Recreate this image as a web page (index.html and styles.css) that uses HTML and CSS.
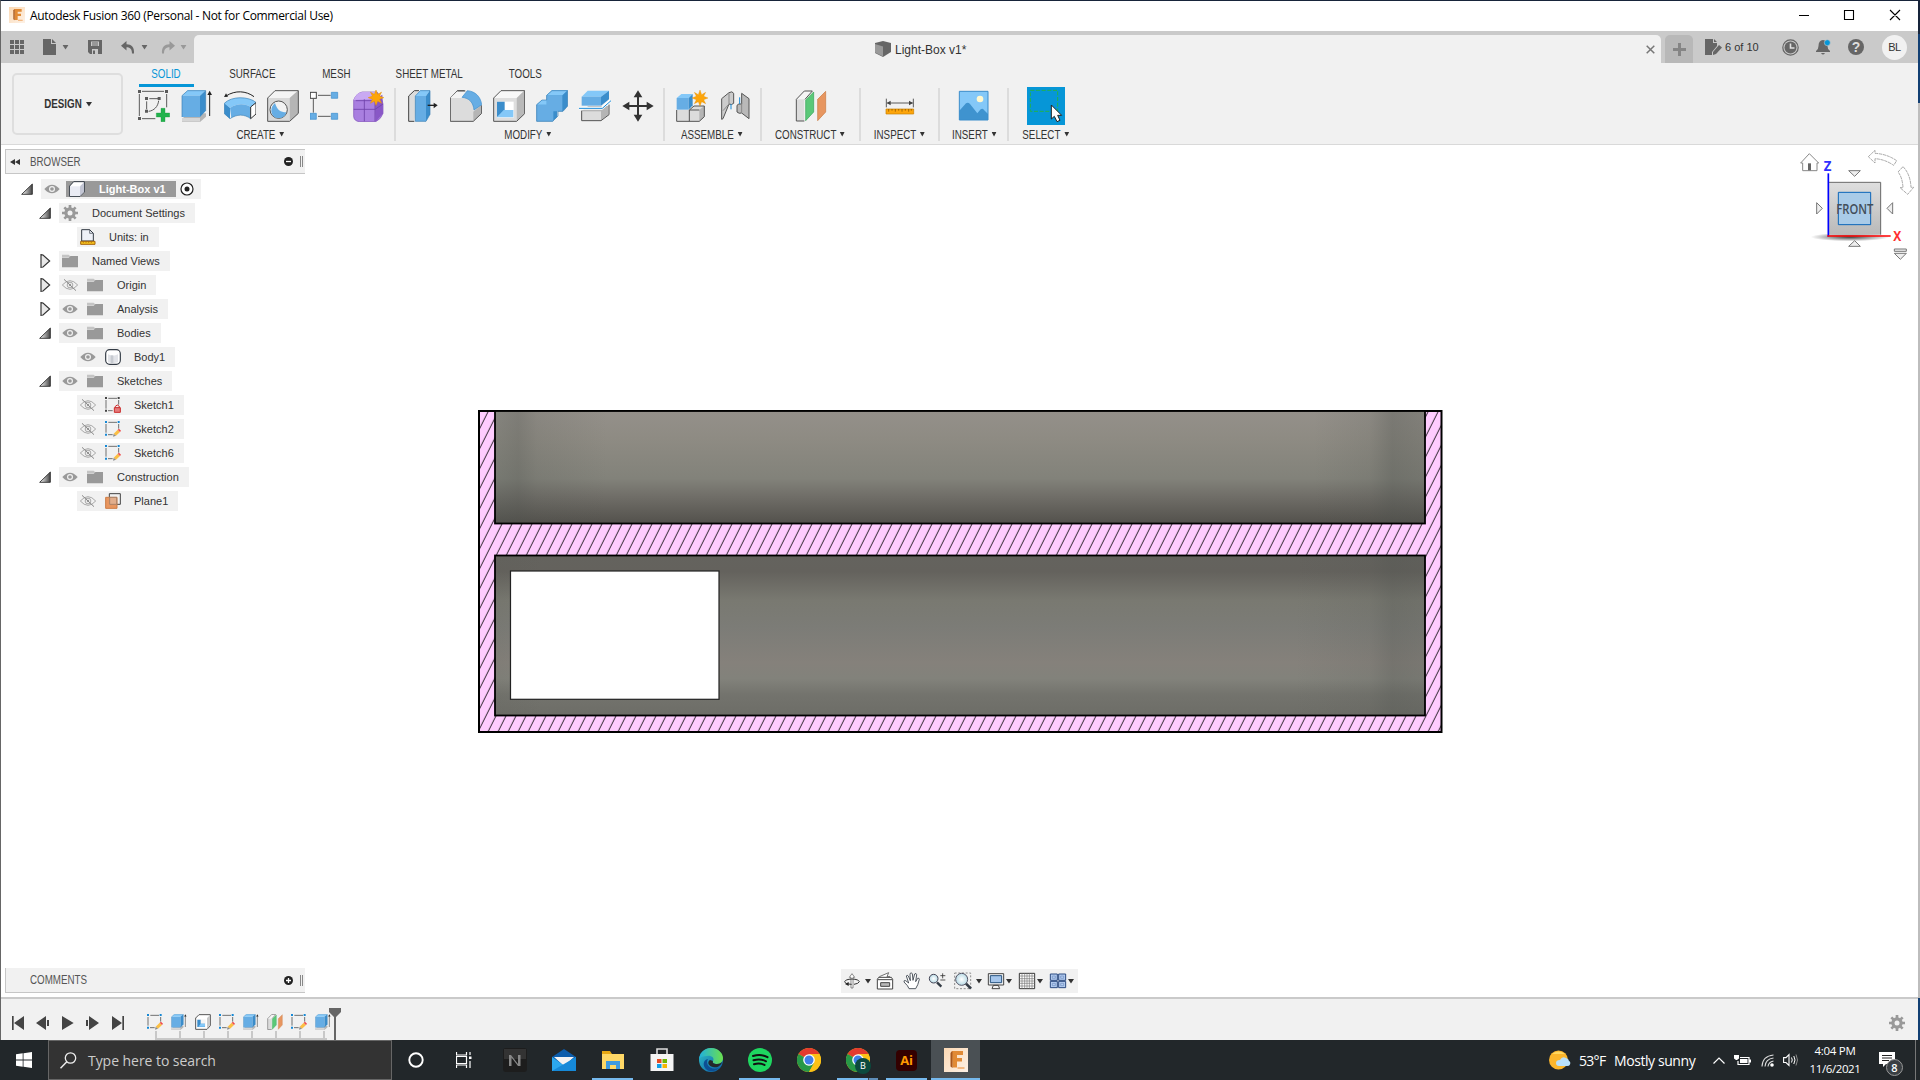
FILE: index.html
```html
<!DOCTYPE html>
<html lang="en">
<head>
<meta charset="utf-8">
<title>Autodesk Fusion 360 (Personal - Not for Commercial Use)</title>
<link rel="stylesheet" href="styles.css">
</head>
<body>
<svg class="sprite" width="0" height="0" aria-hidden="true">
  <defs>
    <linearGradient id="goldF" x1="0" y1="0" x2="1" y2="1"><stop offset="0" stop-color="#fbd9b4"/><stop offset="1" stop-color="#fdf1e6"/></linearGradient>
    <linearGradient id="triG" x1="0" y1="0" x2="1" y2="0"><stop offset="0" stop-color="#fff"/><stop offset="1" stop-color="#444"/></linearGradient>
    <linearGradient id="edgeG" x1="0" y1="0" x2="1" y2="1"><stop offset="0" stop-color="#2fc3c9"/><stop offset="1" stop-color="#0c59a4"/></linearGradient>
    <linearGradient id="edgeT" x1="0" y1="0" x2="1" y2="0"><stop offset="0" stop-color="#1fb0e0"/><stop offset="1" stop-color="#6be04d"/></linearGradient>
    <linearGradient id="cubeG" x1="0" y1="0" x2="0" y2="1"><stop offset="0" stop-color="#dedede"/><stop offset="1" stop-color="#b9b9b9"/></linearGradient>
    <radialGradient id="lens"><stop offset="0" stop-color="#fff"/><stop offset="1" stop-color="#b9dbe6"/></radialGradient>
  </defs>
  <symbol id="fusion" viewBox="0 0 48 48"><rect width="48" height="48" fill="url(#goldF)"/><path d="M16 6h22v8H26v6h10v7H26v12h-9z" fill="#e18a35"/><path d="M16 6l-3 4v27l4 3V8z" fill="#a8571c"/><path d="M27 38h14v4H27z" fill="#f4b982"/></symbol>
  <symbol id="caret" viewBox="0 0 6 5"><path d="M0 0h6L3 4.5z" fill="currentColor"/></symbol>

  <symbol id="b-sketch" viewBox="0 0 96 96"><path d="M4 12v66M12 4h66M86 12v40M12 86h40M26 34v24M34 26h26M62 32c-2 18-14 30-30 32" fill="none" stroke="#5b5b5b" stroke-width="3"/><path d="M0 0h9v9H0zM81 0h9v9h-9zM0 81h9v9H0zM21 21h9v9h-9zM59 21h9v9h-9zM21 59h9v9h-9z" fill="#5b5b5b"/><path d="M69 55h12v14h14v12H81v14H69V81H55V69h14z" fill="#22b24c" stroke="#139238" stroke-width="1"/></symbol>
  <symbol id="b-extrude" viewBox="0 0 96 96"><path d="M3 86l20-16h52v10L57 96H3z" fill="#b5b5b5"/><path d="M3 84h54v11H3z" fill="#d6d6d6"/><path d="M3 17L20 1h54L57 17z" fill="#84c8f8"/><path d="M3 17h54v64H3z" fill="#66ade4"/><path d="M57 17L74 1v62L57 81z" fill="#3b8dcb"/><path d="M3 81V17L20 2h54v61" fill="none" stroke="#3a80b5" stroke-width="2"/><path d="M86 78V12" stroke="#222" stroke-width="3"/><path d="M86 2l7 13H79z" fill="#222"/></symbol>
  <symbol id="b-revolve" viewBox="0 0 96 96"><path d="M1 40C22 18 74 18 97 38L80 51C62 40 38 40 18 54z" fill="#84c8f8"/><path d="M18 54C38 40 62 40 80 51v35c-18-14-40-14-58-2z" fill="#66ade4"/><path d="M1 40l17 14v32L1 71z" fill="#3b8dcb"/><path d="M1 40C22 18 74 18 97 38L80 51v35c-18-14-42-14-62 0L1 71z" fill="none" stroke="#3a80b5" stroke-width="2"/><path d="M80 51l16-13v34L80 86z" fill="#fff" stroke="#333" stroke-width="3"/><path d="M6 18C34 0 66 2 90 20" fill="none" stroke="#222" stroke-width="3"/><path d="M0 21l6-11 6 10z" fill="#222"/></symbol>
  <symbol id="b-hole" viewBox="0 0 96 96"><path d="M2 24L24 1h70L68 24z" fill="#f4f4f4"/><path d="M2 24h66v70H2z" fill="#d9d9d9"/><path d="M68 24L94 1v70L68 94z" fill="#b5b5b5"/><path d="M2 94V24L24 2h70v68L68 94z" fill="none" stroke="#555" stroke-width="3"/><circle cx="35" cy="59" r="26" fill="#f2f2f2" stroke="#555" stroke-width="3"/><path d="M24 39c6 20 16 28 34 28a23 23 0 0 1-45-2c-1-12 4-20 11-26z" fill="#66ade4"/></symbol>
  <symbol id="b-pattern" viewBox="0 0 96 96"><path d="M10 26v42M24 16h38M24 79h38" stroke="#5b5b5b" stroke-width="3"/><rect x="1" y="7" width="18" height="18" fill="#fff" stroke="#444" stroke-width="3"/><path d="M64 7h19v18H64zM0 70h19v18H0zM64 70h19v18H64z" fill="#66ade4" stroke="#3b8dcb" stroke-width="2"/></symbol>
  <symbol id="b-form" viewBox="0 0 96 96"><path d="M2 30Q10 10 28 6h44q18 20 18 36v28q-6 18-22 25H20Q4 94 2 80z" fill="#a97fe0" stroke="#7d4fb8" stroke-width="2"/><path d="M2 30Q10 8 28 6h44l-8 22z" fill="#c9a9f2"/><path d="M66 28l22-14 2 56-22 25z" fill="#8957c6"/><path d="M34 28v66M2 58h64l24-16M8 32h58v62" fill="none" stroke="#6f42a8" stroke-width="2.500"/><use href="#star" x="45" y="-1" width="48" height="48"/></symbol>
  <symbol id="star" viewBox="0 0 48 48"><path d="M24 0l5 14 12-7-6 12 13 5-13 5 6 12-12-6-5 13-5-13-12 6 6-12L0 24l13-5L7 7l12 7z" fill="#fda50a" stroke="#e08c00"/></symbol>
  <symbol id="b-press" viewBox="0 0 96 96"><path d="M5 18L22 1h12v16L22 94H5z" fill="#dcdcdc"/><path d="M22 94H5V18L22 2h14" fill="none" stroke="#444" stroke-width="3"/><path d="M25 18L40 1h29L57 18z" fill="#84c8f8"/><path d="M25 18h32v76H25z" fill="#66ade4"/><path d="M57 18L69 1v72L57 94z" fill="#3b8dcb"/><path d="M25 94V18L40 2h29v71L57 94z" fill="none" stroke="#3a80b5" stroke-width="2"/><path d="M62 46h22" stroke="#222" stroke-width="4"/><path d="M80 38l12 8-12 9z" fill="#222"/></symbol>
  <symbol id="b-fillet" viewBox="0 0 96 96"><path d="M1 24L22 1h20L94 46v24L70 94H1z" fill="#dcdcdc"/><path d="M70 65L95 44v26L70 94z" fill="#b5b5b5"/><path d="M1 94V24L22 2h22M95 46v24L70 94H1" fill="none" stroke="#555" stroke-width="3"/><path d="M1 24h36L60 4H22z" fill="#f4f4f4"/><path d="M22 3h24" stroke="#555" stroke-width="3"/><path d="M36 22L52 2c24 2 40 18 43 42L72 60C70 38 58 24 36 22z" fill="#66ade4" stroke="#3b8dcb" stroke-width="2"/></symbol>
  <symbol id="b-shell" viewBox="0 0 96 96"><path d="M2 24L24 1h71L71 24z" fill="#f8f8f8"/><path d="M2 24h69v70H2z" fill="#dedede"/><path d="M71 24L95 1v70L71 94z" fill="#b9b9b9"/><path d="M2 94V24L24 2h71v69L71 94z" fill="none" stroke="#555" stroke-width="3"/><path d="M12 35h50v48H12z" fill="#fff"/><path d="M12 35h23v26L12 82z" fill="#3b8dcb"/><path d="M12 82l20-22h29v22z" fill="#84c8f8"/></symbol>
  <symbol id="b-combine" viewBox="0 0 96 96"><path d="M2 44l16-14h14V16L48 1h47v47L81 64H64v16L50 94H2z" fill="#3b8dcb"/><path d="M2 44h30V16h47v48H52v30H2z" fill="#66ade4"/><path d="M2 44l16-14h14v14zM32 16L48 1h47L79 16z" fill="#84c8f8"/><path d="M2 94V44l16-14h14V16L48 2h47v46L81 64H66v14L50 94z" fill="none" stroke="#3a80b5" stroke-width="2"/></symbol>
  <symbol id="b-split" viewBox="0 0 96 96"><path d="M8 62l20-14h60v26L66 91H8z" fill="#b5b5b5"/><path d="M8 64h58v27H8z" fill="#dcdcdc"/><path d="M8 62v30h58l24-18V44" fill="none" stroke="#555" stroke-width="3"/><path d="M8 20L26 2h64L66 20z" fill="#84c8f8"/><path d="M8 20h58v27H8z" fill="#66ade4"/><path d="M66 20L90 2v26L66 47z" fill="#3b8dcb"/><path d="M0 55h68l27-24" fill="none" stroke="#fff" stroke-width="9"/><path d="M0 55h70l26-23" fill="none" stroke="#1689d6" stroke-width="3"/></symbol>
  <symbol id="b-move" viewBox="0 0 96 96"><path d="M48 14v68M14 48h68" stroke="#333" stroke-width="6"/><path d="M48 1l13 21H35zM48 95l13-21H35zM1 48l21-13v26zM95 48L74 35v26z" fill="#333"/></symbol>
  <symbol id="b-component" viewBox="0 0 96 96"><path d="M2 60h38l10-12h35v32L70 94H2z" fill="#dcdcdc"/><path d="M70 60l15-13v33L70 94z" fill="#b5b5b5"/><path d="M2 60v34h68l15-14V48H54L40 60v34M40 60h30" fill="none" stroke="#555" stroke-width="3"/><path d="M2 24l14-12h34L38 24z" fill="#84c8f8"/><path d="M2 24h36v35H2z" fill="#66ade4"/><path d="M38 24l12-12v34L38 59z" fill="#3b8dcb"/><use href="#star" x="48" y="0" width="48" height="48"/></symbol>
  <symbol id="b-joint" viewBox="0 0 96 96"><path d="M8 26L30 8q10-6 14 2v30q-6 6-14 2L12 86l-4 2z" fill="#ccc" stroke="#555" stroke-width="3"/><path d="M30 10v32L12 62" fill="none" stroke="#888" stroke-width="3"/><path d="M90 86V26L68 10v32q-10-2-14 4v20q6 6 14 3z" fill="#b9b9b9" stroke="#555" stroke-width="3"/><path d="M68 40v28" stroke="#888" stroke-width="3"/><path d="M36 42v16M62 22v20" stroke="#1689d6" stroke-width="3"/></symbol>
  <symbol id="b-construct" viewBox="0 0 96 96"><path d="M4 28L28 3h24L30 94H4z" fill="#f6f6f6"/><path d="M4 28h24v65H4z" fill="#dcdcdc"/><path d="M28 93H4V28L28 3h24L30 28" fill="none" stroke="#555" stroke-width="3"/><path d="M32 30L56 6v60L32 92z" fill="#5ac878" stroke="#35a556" stroke-width="2"/><path d="M68 28L92 4v62L68 92z" fill="#e79660" stroke="#c87840" stroke-width="2"/></symbol>
  <symbol id="b-inspect" viewBox="0 0 96 96"><path d="M7 26v26M88 26v26M10 39h76" stroke="#5b5b5b" stroke-width="3"/><path d="M8 39l12-7v14zM87 39l-12-7v14z" fill="#444"/><path d="M6 57h83v15H6z" fill="#fda50a" stroke="#c77f00" stroke-width="2"/><path d="M14 57v8M24 57v5M34 57v8M44 57v5M54 57v8M64 57v5M74 57v8M82 57v5" stroke="#7a4c00" stroke-width="2"/></symbol>
  <symbol id="b-insert" viewBox="0 0 96 96"><path d="M4 4h86v86H4z" fill="#84c8f8"/><circle cx="66" cy="27" r="10" fill="#fff8d0"/><path d="M4 62l20-22q6-5 12 2l22 28 10-12q6-4 10 2l12 12v18H4z" fill="#3f93cf"/><path d="M4 4h86v86H4z" fill="none" stroke="#3b8dcb" stroke-width="3"/></symbol>
  <symbol id="b-select" viewBox="0 0 114 114"><rect width="114" height="114" fill="#0696d7"/><path d="M10 10h82v63H10z" fill="none" stroke="#22b24c" stroke-width="3" stroke-dasharray="12 5"/><path d="M73 54v42l9-8 8 16 9-4-7-15h12z" fill="#fff" stroke="#222" stroke-width="3"/></symbol>

  <symbol id="eye" viewBox="0 0 48 36"><path d="M1 18Q24-8 47 18 24 44 1 18z" fill="#999"/><circle cx="24" cy="18" r="9" fill="#f1f1f1"/><circle cx="24" cy="18" r="5.5" fill="#999"/></symbol>
  <symbol id="eye-off" viewBox="0 0 48 36"><path d="M1 18Q24-8 47 18 24 44 1 18z" fill="none" stroke="#999" stroke-width="2.5"/><circle cx="24" cy="18" r="8.5" fill="none" stroke="#999" stroke-width="2.5"/><circle cx="24" cy="18" r="3.5" fill="#999"/><path d="M6 1l36 34" stroke="#888" stroke-width="3"/></symbol>
  <symbol id="folder" viewBox="0 0 48 48"><path d="M0 5h20l4 4h24v4H0z" fill="#c4c4c4"/><path d="M0 14h20l6-5h22v34H0z" fill="#999"/></symbol>
  <symbol id="gear" viewBox="0 0 48 48"><path d="M20 0h8v48h-8zM0 20h48v8H0z" fill="#999"/><path d="M20 0h8v48h-8zM0 20h48v8H0z" fill="#999" transform="rotate(45 24 24)"/><circle cx="24" cy="24" r="17" fill="#999"/><circle cx="24" cy="24" r="7.5" fill="#f1f1f1"/></symbol>
  <symbol id="open" viewBox="0 0 36 36"><path d="M2 34L34 3v31z" fill="url(#triG)" stroke="#222" stroke-width="2.5"/></symbol>
  <symbol id="closed" viewBox="0 0 36 42"><path d="M6 2l6 1 20 18-20 18-6 1z" fill="#e8e8e8" stroke="#333" stroke-width="3.500"/></symbol>
  <symbol id="cube" viewBox="0 0 48 48"><path d="M2 15L14 2h32v31L33 46H2z" fill="#fff" stroke="#333b45" stroke-width="3" stroke-linejoin="round"/><path d="M3 16h30v29H3z" fill="#e9ebf3"/><path d="M33 16L45 4v29L33 45z" fill="#c3c6d4"/></symbol>
  <symbol id="units" viewBox="0 0 48 48"><path d="M5 36V2h24l11 11v23z" fill="#eef1f8" stroke="#333b45" stroke-width="3"/><path d="M29 2v11h11" fill="none" stroke="#333b45" stroke-width="2"/><path d="M2 37h43v9H2z" fill="#f6c21c" stroke="#a8660c" stroke-width="3"/><path d="M10 37v5M18 37v5M26 37v5M34 37v5" stroke="#a8660c" stroke-width="2"/></symbol>
  <symbol id="body" viewBox="0 0 48 48"><rect x="2" y="2" width="44" height="44" rx="12" fill="#fff" stroke="#333b45" stroke-width="3.5"/><path d="M9 16q15 8 30 0v24q-15 5-30 0z" fill="#e1e3e8"/><path d="M17 19h8v23h-8z" fill="#c6cad0"/></symbol>
  <symbol id="frame" viewBox="0 0 48 48"><path d="M3 9v26M10 4h26M41 9v14M9 41h14" stroke="#555" stroke-width="2.5"/></symbol>
  <symbol id="sk-lock" viewBox="0 0 48 48"><use href="#frame"/><path d="M0 0h6v6H0zM38 0h6v6h-6zM0 38h6v6H0z" fill="#444"/><path d="M31 32v-4q6-8 12 0v4" fill="none" stroke="#c22" stroke-width="3"/><path d="M28 32h18v14H28z" fill="#e57b7b" stroke="#c92a2a" stroke-width="3"/></symbol>
  <symbol id="sk-edit" viewBox="0 0 48 48"><use href="#frame"/><path d="M0 0h6v6H0zM38 0h6v6h-6zM0 38h6v6H0z" fill="#1689d6"/><path d="M26 38l12-12 7 7-12 11z" fill="#fbbf45"/><path d="M38 26l4-3 6 6-3 4z" fill="#ef4b4b"/><path d="M26 38l7 6-9 3z" fill="#8c8c8c"/></symbol>
  <symbol id="sm-shell" viewBox="0 0 48 48"><path d="M2 12L12 2h34v33L36 46H2z" fill="#fff" stroke="#555" stroke-width="3"/><path d="M36 12L45 4v30l-9 10z" fill="#c8c8c8"/><path d="M6 16h26v24H6z" fill="#f4f4f4"/><path d="M7 17h10v12h13v10H7z" fill="#3b8dcb"/><path d="M10 38l7-9h13v9z" fill="#84c8f8"/></symbol>
  <symbol id="plane" viewBox="0 0 48 48"><path d="M13 12V2h33v32H36" fill="none" stroke="#444" stroke-width="3"/><path d="M2 13h34v33H2z" fill="#e8965f" stroke="#cd7c45" stroke-width="3"/><path d="M14 13h21v21H14z" fill="#e2ae8c" stroke="#8e7260" stroke-width="2"/></symbol>
</svg>

<div class="window">
  <header class="titlebar">
    <svg class="app-icon" viewBox="0 0 48 48"><use href="#fusion"/></svg>
    <span class="app-name">Autodesk Fusion 360 (Personal - Not for Commercial Use)</span>
    <svg class="win-controls" viewBox="0 0 104 12"><path d="M0 6.5h10M45.5 1.500h9v9h-9zM91 1l10 10M101 1L91 11" fill="none" stroke="#000" stroke-width="1.1"/></svg>
  </header>

  <nav class="tabbar">
    <div class="quick">
      <svg class="q-grid" width="14" height="14" viewBox="0 0 14 14"><path d="M0 0h4v4H0zM5 0h4v4H5zM10 0h4v4h-4zM0 5h4v4H0zM5 5h4v4H5zM10 5h4v4h-4zM0 10h4v4H0zM5 10h4v4H5zM10 10h4v4h-4z" fill="#666"/></svg>
      <svg class="q-file" width="13" height="16" viewBox="0 0 13 16"><path d="M0 0h8v5h5v11H0zM9 0l4 4H9z" fill="#666"/></svg>
      <svg class="q-caret a" width="7" height="5" viewBox="0 0 6 5"><use href="#caret"/></svg>
      <svg class="q-save" width="14" height="14" viewBox="0 0 14 14"><path d="M0 0h14v14H2l-2-2z" fill="#666"/><path d="M3 1.500h8V6H3zM4 9h6v5H4z" fill="#cacaca"/><path d="M4 3h6M4 5h6" stroke="#666"/><path d="M5 10.500h2V14H5z" fill="#666"/></svg>
      <svg class="q-undo" width="14" height="13" viewBox="0 0 14 13"><path d="M5.500 0v3.300C10.500 3.300 13.500 6 13 12.500h-2C11 8.500 9.500 6.200 5.500 6.200v3.300L0 4.700z" fill="#666"/></svg>
      <svg class="q-caret b" width="7" height="5" viewBox="0 0 6 5"><use href="#caret"/></svg>
      <svg class="q-redo" width="14" height="13" viewBox="0 0 14 13"><path d="M8.500 0v3.300C3.500 3.300.5 6 1 12.500h2C3 8.500 4.500 6.200 8.500 6.200v3.300L14 4.700z" fill="#999"/></svg>
      <svg class="q-caret c" width="7" height="5" viewBox="0 0 6 5"><use href="#caret"/></svg>
    </div>
    <div class="doc-tab">
      <svg width="16" height="16" viewBox="0 0 16 16"><path d="M0 2l8-2 8 2v9l-8 5-8-4z" fill="#666"/><path d="M0 3l8 2.500V15.500l-8-4z" fill="#999"/></svg>
      <span class="doc-name">Light-Box v1*</span>
      <svg class="tab-close" width="9" height="9" viewBox="0 0 9 9"><path d="M.7.7l7.600 7.600M8.300.7L.7 8.300" stroke="#777" stroke-width="1.500"/></svg>
    </div>
    <div class="new-tab"><svg width="13" height="13" viewBox="0 0 13 13"><path d="M6.500 0v13M0 6.500h13" stroke="#858585" stroke-width="3"/></svg></div>
    <div class="account">
      <svg class="a-doc" width="17" height="16" viewBox="0 0 17 16"><path d="M0 0h8v4h4v3l-5 6v3H0zM9 0l3 3H9z" fill="#666"/><path d="M8 13l6-7 3 2.500-6 6.500-3 1z" fill="#666"/></svg>
      <span class="a-count">6 of 10</span>
      <svg class="a-clock" width="17" height="17" viewBox="0 0 17 17"><circle cx="8.500" cy="8.500" r="7.700" fill="none" stroke="#666" stroke-width="1.200"/><circle cx="8.500" cy="8.500" r="6" fill="#666"/><path d="M8.500 4.500v4.500h4" fill="none" stroke="#e0e0e0" stroke-width="1.600"/></svg>
      <svg class="a-bell" width="15" height="16" viewBox="0 0 15 16"><path d="M7 1q4.500.5 4.500 6 0 3.500 2.500 5v1H0v-1q2.500-1.500 2.500-5Q2.500 1.500 7 1zM5 14h4q-2 3-4 0z" fill="#666"/><circle cx="11.300" cy="3.700" r="3" fill="#0696d7" stroke="#cacaca" stroke-width=".6"/></svg>
      <span class="a-help">?</span>
      <span class="avatar">BL</span>
    </div>
  </nav>

  <section class="ribbon">
    <div class="workspace"><span class="cond">DESIGN</span><svg class="caret" viewBox="0 0 6 5"><use href="#caret"/></svg></div>
    <div class="ribbon-main">
      <div class="ribbon-tabs">
        <span class="rtab active"><i class="cond">SOLID</i></span><span class="rtab"><i class="cond">SURFACE</i></span><span class="rtab"><i class="cond">MESH</i></span><span class="rtab"><i class="cond">SHEET METAL</i></span><span class="rtab"><i class="cond">TOOLS</i></span>
      </div>
      <div class="groups">
        <div class="group create"><div class="tools"><svg><use href="#b-sketch"/></svg><svg><use href="#b-extrude"/></svg><svg><use href="#b-revolve"/></svg><svg><use href="#b-hole"/></svg><svg><use href="#b-pattern"/></svg><svg><use href="#b-form"/></svg></div><div class="glabel cond">CREATE<svg class="caret" viewBox="0 0 6 5"><use href="#caret"/></svg></div></div>
        <div class="group modify"><div class="tools"><svg><use href="#b-press"/></svg><svg><use href="#b-fillet"/></svg><svg><use href="#b-shell"/></svg><svg><use href="#b-combine"/></svg><svg><use href="#b-split"/></svg><svg><use href="#b-move"/></svg></div><div class="glabel cond">MODIFY<svg class="caret" viewBox="0 0 6 5"><use href="#caret"/></svg></div></div>
        <div class="group assemble"><div class="tools"><svg><use href="#b-component"/></svg><svg><use href="#b-joint"/></svg></div><div class="glabel cond">ASSEMBLE<svg class="caret" viewBox="0 0 6 5"><use href="#caret"/></svg></div></div>
        <div class="group construct"><div class="tools"><svg><use href="#b-construct"/></svg></div><div class="glabel cond">CONSTRUCT<svg class="caret" viewBox="0 0 6 5"><use href="#caret"/></svg></div></div>
        <div class="group inspect"><div class="tools"><svg><use href="#b-inspect"/></svg></div><div class="glabel cond">INSPECT<svg class="caret" viewBox="0 0 6 5"><use href="#caret"/></svg></div></div>
        <div class="group insert"><div class="tools"><svg><use href="#b-insert"/></svg></div><div class="glabel cond">INSERT<svg class="caret" viewBox="0 0 6 5"><use href="#caret"/></svg></div></div>
        <div class="group select"><div class="tools"><svg class="big"><use href="#b-select"/></svg></div><div class="glabel cond">SELECT<svg class="caret" viewBox="0 0 6 5"><use href="#caret"/></svg></div></div>
      </div>
    </div>
  </section>

  <main class="canvas">
    <aside class="side">
      <div class="panel-head">
        <svg class="collapse" width="10" height="6" viewBox="0 0 10 6"><path d="M5 0v6L0 3zM10 0v6L5 3z" fill="#333"/></svg>
        <span class="cond">BROWSER</span>
        <svg class="dot" width="9" height="9" viewBox="0 0 9 9"><circle cx="4.500" cy="4.500" r="4.500" fill="#222"/><path d="M2 4.500h5" stroke="#fff" stroke-width="1.300"/></svg>
        <b class="grip"></b>
      </div>
      <div class="tree">
        <div class="row l0"><svg class="tw"><use href="#open"/></svg><div class="chip root"><svg class="ic eye"><use href="#eye"/></svg><div class="sel"><svg class="ic"><use href="#cube"/></svg><span>Light-Box v1</span></div><svg class="radio" width="14" height="14" viewBox="0 0 14 14"><circle cx="7" cy="7" r="6" fill="#fff" stroke="#222" stroke-width="1.200"/><circle cx="7" cy="7" r="2.500" fill="#222"/></svg></div></div>
        <div class="row l1"><svg class="tw"><use href="#open"/></svg><div class="chip"><svg class="ic"><use href="#gear"/></svg><span>Document Settings</span></div></div>
        <div class="row l2"><div class="chip"><svg class="ic"><use href="#units"/></svg><span class="wide">Units: in</span></div></div>
        <div class="row l1"><svg class="tw shut"><use href="#closed"/></svg><div class="chip"><svg class="ic"><use href="#folder"/></svg><span>Named Views</span></div></div>
        <div class="row l1"><svg class="tw shut"><use href="#closed"/></svg><div class="chip"><svg class="ic eye"><use href="#eye-off"/></svg><svg class="ic"><use href="#folder"/></svg><span>Origin</span></div></div>
        <div class="row l1"><svg class="tw shut"><use href="#closed"/></svg><div class="chip"><svg class="ic eye"><use href="#eye"/></svg><svg class="ic"><use href="#folder"/></svg><span>Analysis</span></div></div>
        <div class="row l1"><svg class="tw"><use href="#open"/></svg><div class="chip"><svg class="ic eye"><use href="#eye"/></svg><svg class="ic"><use href="#folder"/></svg><span>Bodies</span></div></div>
        <div class="row l2"><div class="chip"><svg class="ic eye"><use href="#eye"/></svg><svg class="ic"><use href="#body"/></svg><span>Body1</span></div></div>
        <div class="row l1"><svg class="tw"><use href="#open"/></svg><div class="chip"><svg class="ic eye"><use href="#eye"/></svg><svg class="ic"><use href="#folder"/></svg><span>Sketches</span></div></div>
        <div class="row l2"><div class="chip"><svg class="ic eye"><use href="#eye-off"/></svg><svg class="ic"><use href="#sk-lock"/></svg><span>Sketch1</span></div></div>
        <div class="row l2"><div class="chip"><svg class="ic eye"><use href="#eye-off"/></svg><svg class="ic"><use href="#sk-edit"/></svg><span>Sketch2</span></div></div>
        <div class="row l2"><div class="chip"><svg class="ic eye"><use href="#eye-off"/></svg><svg class="ic"><use href="#sk-edit"/></svg><span>Sketch6</span></div></div>
        <div class="row l1"><svg class="tw"><use href="#open"/></svg><div class="chip"><svg class="ic eye"><use href="#eye"/></svg><svg class="ic"><use href="#folder"/></svg><span>Construction</span></div></div>
        <div class="row l2"><div class="chip"><svg class="ic eye"><use href="#eye-off"/></svg><svg class="ic"><use href="#plane"/></svg><span>Plane1</span></div></div>
      </div>
      <div class="panel-head comments">
        <span class="cond">COMMENTS</span>
        <svg class="dot" width="9" height="9" viewBox="0 0 9 9"><circle cx="4.500" cy="4.500" r="4.500" fill="#222"/><path d="M2 4.500h5M4.500 2v5" stroke="#fff" stroke-width="1.300"/></svg>
        <b class="grip"></b>
      </div>
    </aside>

    <div class="stage">
      <svg class="model" width="966" height="324" viewBox="477 409 966 324">
        <defs>
          <pattern id="hatch" width="10" height="20" patternUnits="userSpaceOnUse" patternTransform="translate(3.900 0)">
            <rect width="10" height="20" fill="#ffccff"/>
            <path d="M-5 30L15-10M-5 10L5-10M5 30L15 10" stroke="#000" stroke-width=".85"/>
          </pattern>
          <linearGradient id="upper" x1="0" y1="0" x2="0" y2="1"><stop offset="0" stop-color="#94908a"/><stop offset=".25" stop-color="#8e8b83"/><stop offset=".6" stop-color="#82827a"/><stop offset=".75" stop-color="#716f69"/><stop offset="1" stop-color="#53514c"/></linearGradient>
          <linearGradient id="lower" x1="0" y1="0" x2="0" y2="1"><stop offset="0" stop-color="#64635e"/><stop offset=".1" stop-color="#64625d"/><stop offset=".28" stop-color="#797971"/><stop offset=".45" stop-color="#7c7c77"/><stop offset=".67" stop-color="#85817b"/><stop offset=".77" stop-color="#82827b"/><stop offset=".87" stop-color="#73736d"/><stop offset="1" stop-color="#6d6d67"/></linearGradient>
          <linearGradient id="ends" x1="0" y1="0" x2="1" y2="0"><stop offset="0" stop-color="#4c5550" stop-opacity=".2"/><stop offset=".025" stop-color="#4c504c" stop-opacity=".3"/><stop offset=".045" stop-color="#4c504c" stop-opacity=".14"/><stop offset=".12" stop-color="#4c504c" stop-opacity="0"/><stop offset=".88" stop-color="#4c504c" stop-opacity="0"/><stop offset=".94" stop-color="#4c504c" stop-opacity=".12"/><stop offset=".965" stop-color="#4c504c" stop-opacity=".35"/><stop offset="1" stop-color="#4c504c" stop-opacity=".25"/></linearGradient>
          <linearGradient id="endsLow" x1="0" y1="0" x2="1" y2="0"><stop offset="0" stop-color="#55584f" stop-opacity=".1"/><stop offset=".05" stop-color="#4c504c" stop-opacity="0"/><stop offset=".86" stop-color="#4c504c" stop-opacity="0"/><stop offset=".94" stop-color="#4c504c" stop-opacity=".1"/><stop offset=".965" stop-color="#4c504c" stop-opacity=".28"/><stop offset="1" stop-color="#4c504c" stop-opacity=".2"/></linearGradient>
        </defs>
        <rect x="479" y="411" width="962.500" height="321" fill="url(#hatch)" shape-rendering="crispEdges"/>
        <rect x="479" y="411" width="962.500" height="321" fill="none" stroke="#000" stroke-width="2"/>
        <rect x="495" y="411" width="930" height="112.500" fill="url(#upper)"/>
        <rect x="495" y="411" width="930" height="112.500" fill="url(#ends)" stroke="#000" stroke-width="1.800"/>
        <rect x="495" y="555.500" width="930" height="160" fill="url(#lower)"/>
        <rect x="495" y="555.500" width="930" height="160" fill="url(#endsLow)" stroke="#000" stroke-width="1.800"/>
        <rect x="510.500" y="571" width="208.500" height="128.300" fill="#fff" stroke="#222" stroke-width="1.200"/>
      </svg>
      <div class="navbar">
        <svg class="n1" viewBox="0 0 54 54"><path d="M24 48V16h-5L27 5l8 11h-5v32z" fill="#fff" stroke="#555" stroke-width="2"/><path d="M26 37Q6 36 5 29q2-7 22-8 20 1 22 8-2 6-16 8" fill="none" stroke="#333" stroke-width="3"/><path d="M6 36l11-6v12z" fill="#222"/></svg>
        <svg class="nc m5" viewBox="0 0 6 5"><use href="#caret"/></svg>
        <svg class="n3" viewBox="0 0 54 54"><path d="M10 14L38 2l-5 12h9" fill="#fff" stroke="#555" stroke-width="2.500"/><path d="M4 22l4-6h38l4 6v29H4z" fill="#fff" stroke="#444" stroke-width="3"/><path d="M5 23h44" stroke="#444" stroke-width="3"/><path d="M14 32h27v11H14z" fill="#b9b9b9" stroke="#444" stroke-width="3"/></svg>
        <svg class="n4" viewBox="0 0 54 54"><path d="M18 50Q16 42 3 30q-1-6 5-4l9 7L10 12q2-5 6 0l6 14-1-21q3-5 7 0l2 20 5-19q5-4 6 2l-3 21 6-10q5-2 5 3-4 18-11 28z" fill="#fff" stroke="#333b45" stroke-width="2.500" stroke-linejoin="round"/></svg>
        <svg class="n5" viewBox="0 0 54 54"><circle cx="17" cy="20" r="13" fill="url(#lens)" stroke="#445" stroke-width="3"/><path d="M27 31l13 13" stroke="#333b45" stroke-width="7"/><path d="M44 4v15M37 11h15M37 24h15" stroke="#333" stroke-width="2.500"/></svg>
        <svg class="n6" viewBox="0 0 54 54"><path d="M2 3h48v47H2z" fill="none" stroke="#777" stroke-width="2.500" stroke-dasharray="6 5"/><circle cx="23" cy="22" r="18" fill="url(#lens)" stroke="#556" stroke-width="3"/><path d="M36 35l15 15" stroke="#333b45" stroke-width="8"/></svg>
        <svg class="nc m4" viewBox="0 0 6 5"><use href="#caret"/></svg>
        <svg class="n7" viewBox="0 0 54 54"><path d="M4 5h46v34H4zM19 40h15l4 10H15z" fill="#f4f4f4" stroke="#444" stroke-width="3"/><path d="M10 11h34v21H10z" fill="#a5c6ec" stroke="#26527e" stroke-width="3"/></svg>
        <svg class="nc m1" viewBox="0 0 6 5"><use href="#caret"/></svg>
        <svg class="n8" viewBox="0 0 54 54"><path d="M4 4h46v46H4z" fill="#fff" stroke="#333" stroke-width="3"/><path d="M12 4v46M20 4v46M27 4v46M34 4v46M42 4v46M4 12h46M4 20h46M4 27h46M4 34h46M4 42h46" stroke="#777" stroke-width="2"/></svg>
        <svg class="nc m1" viewBox="0 0 6 5"><use href="#caret"/></svg>
        <svg class="n9" viewBox="0 0 54 54"><path d="M4 6h21v19H4zM29 6h21v19H29zM4 28h21v19H4zM29 28h21v19H29z" fill="#b5cdf0" stroke="#2b4a80" stroke-width="3"/><path d="M10 12h9v7h-9zM35 12h9v7h-9zM10 34h9v7h-9zM35 34h9v7h-9z" fill="none" stroke="#6b8cc0" stroke-width="2"/></svg>
        <svg class="nc m1" viewBox="0 0 6 5"><use href="#caret"/></svg>
      </div>
    </div>

    <svg class="viewcube" width="125" height="120" viewBox="519 435 375 360">
      <defs><radialGradient id="shade"><stop offset="0" stop-color="#000" stop-opacity=".75"/><stop offset="1" stop-color="#000" stop-opacity="0"/></radialGradient></defs>
      <path d="M542 489l26-28 28 28h-5v23h-43v-23z" fill="#fff" stroke="#888" stroke-width="3"/><path d="M564 490h9v21h-9z" fill="#666"/>
      <ellipse cx="690" cy="711" rx="118" ry="13" fill="url(#shade)"/>
      <path d="M626 548h156v156H626z" fill="url(#cubeG)"/><path d="M626 547h156v157" fill="none" stroke="#666" stroke-width="3"/>
      <path d="M655 577h97v97h-97z" fill="#a9cbe8" stroke="#0a64b8" stroke-width="3"/>
      <text class="face" x="649" y="641" textLength="111" lengthAdjust="spacingAndGlyphs">FRONT</text>
      <path d="M625 520v190" stroke="#0000ff" stroke-width="5"/><path d="M622 708h190" stroke="#f00" stroke-width="5"/>
      <text class="axis z" x="611" y="512" textLength="23" lengthAdjust="spacingAndGlyphs">Z</text><text class="axis x" x="820" y="722" textLength="24" lengthAdjust="spacingAndGlyphs">X</text>
      <g fill="#eee" stroke="#777" stroke-width="3"><path d="M686 512h35l-17 17zM686 739h35l-17-17zM590 608v34l17-17zM818 608v34l-17-17zM823 760h36l-18 18zM823 747h36v7h-36z"/></g>
      <g fill="#fff" stroke="#999" stroke-width="2.500" stroke-dasharray="10 2"><path d="M745 470l20-19v9q36 2 65 22l-9 14q-26-18-56-20v13z"/><path d="M849 500q22 22 24 62h8l-18 21-23-20h9q-2-32-15-47z"/></g>
    </svg>
  </main>

  <footer class="timeline">
    <svg class="play" width="114" height="14" viewBox="0 0 342 42"><path d="M0 0h5v42H0zM36 0v42L6 21zM102 0v42L72 21zM105 12h6v18h-6zM150 0v42l35-21zM222 12h6v18h-6zM231 0v42l30-21zM300 0v42l30-21zM331 0h5v42h-5z" fill="#444"/></svg>
    <div class="features">
      <div class="feat"><svg><use href="#sk-edit"/></svg></div><div class="feat"><svg><use href="#b-extrude"/></svg></div><div class="feat"><svg><use href="#sm-shell"/></svg></div><div class="feat"><svg><use href="#sk-edit"/></svg></div><div class="feat"><svg><use href="#b-extrude"/></svg></div><div class="feat"><svg><use href="#b-construct"/></svg></div><div class="feat"><svg><use href="#sk-edit"/></svg></div><div class="feat"><svg><use href="#b-extrude"/></svg></div>
    </div>
    <svg class="marker" width="12" height="32" viewBox="0 0 12 32"><path d="M0 0h12v4L7 9v23H5V9L0 4z" fill="#666"/></svg>
    <svg class="settings" width="16" height="16"><use href="#gear"/></svg>
  </footer>
</div>

<div class="taskbar">
  <div class="start"><svg width="16" height="16" viewBox="0 0 16 16"><path d="M0 2.300L6.700 1.300V7.500H0zM7.500 1.200L16 0v7.500H7.500zM0 8.400h6.700v6.300L0 13.700zM7.500 8.400H16V16l-8.500-1.200z" fill="#fff"/></svg></div>
  <div class="search"><svg width="17" height="17" viewBox="0 0 17 17"><circle cx="10.500" cy="6" r="5.200" fill="none" stroke="#eee" stroke-width="1.300"/><path d="M6.800 9.800L.5 16.300" stroke="#eee" stroke-width="1.500"/></svg><span>Type here to search</span></div>
  <div class="slot s48"><svg width="16" height="16" viewBox="0 0 16 16"><circle cx="8" cy="8" r="6.700" fill="none" stroke="#fff" stroke-width="1.900"/></svg></div>
  <div class="slot s48"><svg width="16" height="16" viewBox="0 0 16 16"><path d="M.5 0v3h10V0M.5 16v-3h10v3M.5 4.500h10v7H.5zM14 0v3M14 9v7" fill="none" stroke="#fff" stroke-width="1.200"/><path d="M13 4.500h2.500V7H13z" fill="#fff"/></svg></div>
  <div class="slot"><svg viewBox="0 0 24 24"><rect width="24" height="24" rx="3" fill="#1d1d1d"/><path d="M1 1h22v10H1z" fill="#333"/><path d="M6 18V7h2l7 9V7h2.500v11H15L8.500 9.500V18z" fill="#888"/></svg></div>
  <div class="slot"><svg viewBox="0 0 24 24"><path d="M0 9l12-8 12 8v13H0z" fill="#0c5cab"/><path d="M2 9h20l-10 9z" fill="#f2f2f2"/><path d="M0 9l12 8.500L24 9v14H0z" fill="#2ca8ee"/><path d="M0 23L24 9v14z" fill="#1689d8"/></svg></div>
  <div class="slot run"><svg viewBox="0 0 24 24"><path d="M1 3h8l2 3h12v14H1z" fill="#e8a813"/><path d="M1 6h22v15H1z" fill="#ffd866"/><path d="M5 13h14v8h-4v-4H9v4H5z" fill="#3f9be0"/></svg></div>
  <div class="slot"><svg viewBox="0 0 24 24"><path d="M7 6V1h10v5" fill="none" stroke="#ddd" stroke-width="1.600"/><path d="M.5 6h23v17H.5z" fill="#f4f4f4"/><path d="M7 11h4.500v4H7z" fill="#e64a22"/><path d="M12.500 11H17v4h-4.500z" fill="#6fb800"/><path d="M7 16h4.500v4H7z" fill="#0fa0e8"/><path d="M12.500 16H17v4h-4.500z" fill="#f8b400"/></svg></div>
  <div class="slot"><svg viewBox="0 0 24 24"><circle cx="12" cy="12" r="12" fill="url(#edgeG)"/><path d="M0 11C1 4 6 0 12 0c7 0 12 5 12 10 0 4-3 6-6 6-3 0-5-1-4-3 2-3-2-6-6-5-4 0-7 1-8 3z" fill="url(#edgeT)"/><path d="M9 11c-3 5 2 12 11 9-4 4-9 4-12 2-5-4-4-10 1-11z" fill="#0d4f94"/><path d="M14 13c-1 2 1 3 4 3 2 0 4-1 5-2-1 4-5 6-9 5-5-1-6-5-3-7z" fill="#25282b"/></svg></div>
  <div class="slot run"><svg viewBox="0 0 24 24"><circle cx="12" cy="12" r="12" fill="#1ed760"/><path d="M5 8q8-2.500 14.500 1.200M5.500 12.300q7-2 12.500 1M6 16.200q6-1.500 10.500.8" fill="none" stroke="#111" stroke-width="2" stroke-linecap="round"/></svg></div>
  <div class="slot"><svg viewBox="0 0 24 24"><use href="#chrome"/></svg></div>
  <div class="slot run multi"><svg viewBox="0 0 24 24"><use href="#chrome"/></svg><span class="profile">B</span></div>
  <div class="slot run"><span class="ai">Ai</span></div>
  <div class="slot run active"><svg viewBox="0 0 48 48"><use href="#fusion"/></svg></div>
  <svg class="sprite" width="0" height="0"><symbol id="chrome" viewBox="0 0 24 24"><circle cx="12" cy="12" r="12" fill="#fbc116"/><path d="M12 12L1.600 6A12 12 0 0 1 22.400 6z" fill="#e33b2e"/><path d="M1.600 6A12 12 0 0 0 12 24l5.200-9L12 12z" fill="#279847"/><path d="M22.400 6H12l5 9-5 9A12 12 0 0 0 22.400 6z" fill="#fbc116"/><circle cx="12" cy="12" r="5.800" fill="#fff"/><circle cx="12" cy="12" r="4.500" fill="#3f7fe8"/></symbol></svg>

  <div class="tray">
    <svg class="w-icon" width="22" height="20" viewBox="0 0 22 20"><circle cx="9.500" cy="10" r="9.500" fill="#fbb62c"/><path d="M3 4a9.500 9.500 0 0 1 13 0" fill="#ffd860"/><path d="M10 16q-3 0-3-3t4-3q2-4 6-2 3 1 3 3 2 1 1 3.500-.5 1.500-3 1.500z" fill="#b8e0fa"/></svg>
    <span class="temp">53°F</span><span class="sky">Mostly sunny</span>
    <svg class="t-up" width="12" height="7" viewBox="0 0 12 7"><path d="M.5 6.500L6 1l5.500 5.500" fill="none" stroke="#fff" stroke-width="1.200"/></svg>
    <svg class="t-bat" width="17" height="12" viewBox="0 0 17 12"><path d="M6 3.500h9v7H4V7" fill="none" stroke="#fff" stroke-width="1.200"/><path d="M6 5h7.500v4H6zM15 5.500h2v3h-2zM0 1h5v3.500L3 6H2L0 4.500z" fill="#fff"/></svg>
    <svg class="t-wifi" width="13" height="13" viewBox="0 0 13 13"><path d="M1 12.500Q1.500 2 12.500 1M4 12.500Q4.500 5 12.500 4M7 12.500Q7.500 8 12.500 7" fill="none" stroke="#ddd" stroke-width="1.100"/><circle cx="11" cy="11" r="1.800" fill="#fff"/></svg>
    <svg class="t-vol" width="16" height="14" viewBox="0 0 16 14"><path d="M.6 4.600H3L6 1.500v11L3 9.500H.6z" fill="none" stroke="#fff" stroke-width="1.100"/><path d="M8.500 4.500q1.500 2.500 0 5M10.800 3q2.400 4 0 8" fill="none" stroke="#fff"/><path d="M13 1.500q3 5.500 0 11" fill="none" stroke="#888"/></svg>
    <div class="clock"><span>4:04 PM</span><span class="date">11/6/2021</span></div>
    <div class="notes"><svg width="16" height="16" viewBox="0 0 16 16"><path d="M0 0h16v12H7l-3 3v-3H0z" fill="#fff"/><path d="M3 3.500h10M3 6h10M3 8.500h7" stroke="#222" stroke-width="1"/></svg><span class="badge">8</span></div>
  </div>
</div>
</body>
</html>
```
FILE: styles.css
```css
* { box-sizing: border-box; }
body { margin: 0; width: 1920px; height: 1080px; overflow: hidden; font: 11px "Liberation Sans", Arial, sans-serif; color: #333; background: linear-gradient(#17243a 0 34px, #123f73 34px 103px, #bdbdbd 103px 998px, #123f73 998px); }
svg { display: block; flex: none; }
i { font-style: normal; }
.sprite { position: absolute; }
.window { width: 1918px; height: 1040px; border-left: 1px solid #666; border-top: 1px solid #17243a; display: flex; flex-direction: column; background: #fff; }
.cond { display: inline-block; font-size: 12px; transform: scaleX(.815); white-space: nowrap; }
.caret { width: 6px; height: 5px; color: #333; }

.titlebar { height: 30px; display: flex; align-items: center; padding: 0 15px 2px 8px; background: #fff; }
.app-icon { width: 16px; height: 16px; }
.app-name { margin-left: 5px; font: 12px "Open Sans", sans-serif; letter-spacing: -.31px; color: #000; flex: 1; }
.win-controls { width: 104px; height: 12px; }

.tabbar { height: 32px; display: flex; background: #cacaca; }
.quick { width: 193px; display: flex; align-items: center; padding-left: 9px; }
.q-file { margin-left: 19px; }
.q-caret { color: #666; }
.q-caret.a { margin-left: 6px; }
.q-save { margin-left: 19px; }
.q-undo { margin-left: 19px; }
.q-caret.b { margin-left: 6px; }
.q-redo { margin-left: 13px; }
.q-caret.c { margin-left: 5px; color: #999; }
.doc-tab { width: 1467px; margin-top: 4px; display: flex; align-items: center; background: #f1f1f1; border-radius: 5px 5px 0 0; padding: 0 6px 0 681px; }
.doc-name { font-size: 12px; margin-left: 4px; margin-top: 1px; flex: 1; }
.new-tab { width: 28px; margin: 4px 0 0 4px; background: #b8b8b8; border-radius: 5px 5px 0 0; display: grid; place-items: center; }
.account { flex: 1; display: flex; align-items: center; padding-left: 12px; }
.a-count { margin-left: 3px; width: 57px; }
.a-bell { margin-left: 17px; }
.a-help { width: 16px; height: 16px; margin-left: 17px; border-radius: 50%; background: #666; color: #ddd; font: bold 14px/17px "Liberation Sans", sans-serif; text-align: center; }
.avatar { width: 25px; height: 25px; margin-left: 18px; border-radius: 50%; background: #f1f1f1; text-align: center; line-height: 25px; font-size: 11px; letter-spacing: -.6px; }

.ribbon { height: 82px; display: flex; background: #f1f1f1; border-bottom: 1px solid #d9d9d9; }
.workspace { width: 111px; height: 62px; margin: 10px 0 0 11px; padding-right: 3px; border: 2px solid #dedede; border-radius: 5px; display: flex; align-items: center; justify-content: center; font-weight: bold; }
.ribbon-main { margin-left: 5px; }
.ribbon-tabs { display: grid; grid-template-columns: 55px 117px 50px 136px 56px; padding-left: 11px; height: 24px; }
.rtab { display: flex; justify-content: center; align-items: center; padding-bottom: 4px; margin-top: 1px; }
.rtab.active { color: #0696d7; border-bottom: 3px solid #0696d7; padding: 0; }
.rtab i { line-height: 14px; }
.groups { display: flex; }
.group { height: 57px; display: flex; flex-direction: column; align-items: center; padding-top: 3px; border-right: 2px solid transparent; border-image: linear-gradient(transparent 2px, #dcdcdc 2px 53px, transparent 53px) 1; }
.group.select { border-image: none; }
.create { width: 268px; } .modify { width: 269px; } .assemble { width: 97px; } .construct { width: 99px; } .inspect { width: 79px; } .insert { width: 69px; } .select { width: 76px; }
.tools { display: flex; gap: 11px; height: 32px; align-items: center; }
.modify .tools, .assemble .tools { padding-left: 2px; }
.tools svg { width: 32px; height: 32px; }
.tools .big { width: 38px; height: 38px; }
.glabel { display: flex; align-items: center; gap: 4px; margin-top: 6px; line-height: 14px; }
.create .glabel { margin-right: 2px; }
.modify .glabel { margin-right: 3px; }
.assemble .glabel { margin-right: 2px; }
.insert .glabel { margin-left: 2px; }
.glabel .caret { width: 7px; margin-top: -2px; }

.canvas { height: 852px; display: flex; background: #fff; }
.side { width: 300px; margin-left: 4px; padding-top: 4px; display: flex; flex-direction: column; }
.panel-head { height: 25px; display: flex; align-items: center; border: 1px solid #c6c6c6; border-width: 1px 0 1px 1px; background: #f1f1f1; padding-left: 4px; color: #555; }
.panel-head .cond { transform-origin: 0 50%; margin-left: 10px; flex: 1; }
.grip { width: 3px; height: 11px; margin: 0 2px 0 7px; border: 1px solid #888; border-width: 0 1px; }
.comments { margin-top: auto; margin-bottom: 4px; border-top: 0; }
.comments .cond { margin-left: 20px; }
.tree { padding-top: 5px; display: flex; flex-direction: column; gap: 4px; }
.row { height: 20px; display: flex; align-items: center; }
.l0 { padding-left: 16px; } .l1 { padding-left: 34px; } .l2 { padding-left: 72px; }
.tw { width: 12px; height: 12px; margin-right: 8px; }
.tw.shut { height: 14px; }
.chip { height: 20px; display: flex; align-items: center; background: #f1f1f1; padding: 0 10px 0 3px; }
.ic { width: 16px; height: 16px; }
.ic.eye { height: 12px; margin-right: 9px; }
.chip span { margin-left: 14px; line-height: 20px; color: #333; }
.l2 .chip span { margin-left: 13px; }
.root { padding-right: 7px; }
.root .ic.eye { margin-right: 6px; }
.sel { width: 110px; height: 16px; display: flex; align-items: center; background: #999; padding-left: 3px; }
.root .sel span { color: #fff; font-weight: bold; line-height: 16px; }
.radio { margin-left: 4px; }

.stage { width: 1488px; display: flex; flex-direction: column; }
.model { margin: 264px 0 0 172px; }
.navbar { width: 237px; height: 24px; margin: auto 0 4px 536px; background: #f1f1f1; display: flex; align-items: center; }
.navbar svg { width: 18px; height: 18px; }
.navbar .nc { width: 6px; height: 5px; color: #333; }
.n1 { margin-left: 2px; } .n3 { margin-left: 5px; } .n4 { margin-left: 9px; } .n5 { margin-left: 7px; } .n6 { margin-left: 8px; }
.n7 { margin-left: 5px; } .n8, .n9 { margin-left: 6px; }
.m5 { margin-left: 4px; } .m4 { margin-left: 4px; } .m1 { margin-left: 1px; }
.face { font: 600 42px "Open Sans", sans-serif; fill: #434e5a; }
.axis { font: bold 43px "Open Sans", sans-serif; }
.axis.z { fill: #3030ff; } .axis.x { fill: #ff3030; }

.timeline { height: 43px; display: flex; align-items: flex-start; background: #f1f1f1; border-top: 2px solid #cacaca; padding-left: 11px; }
.play { margin-top: 17px; }
.features { display: flex; margin-left: 17px; height: 41px; }
.feat { position: relative; width: 24px; padding: 15px 4px 0; }
.feat svg { width: 16px; height: 16px; }
.feat::after { content: ""; position: absolute; left: 12px; bottom: 0; width: 24px; height: 7px; border: solid #c8c8c8; border-width: 0 0 2px 2px; }
.feat:last-child::after { width: 2px; }
.marker { margin: 9px 0 0 -6px; }
.settings { margin: 16px 13px 0 auto; }

.taskbar { height: 40px; display: flex; background: #22272a; color: #fff; font-family: "Open Sans", sans-serif; }
.start { width: 48px; display: grid; place-items: center; }
.search { width: 344px; border: 1px solid #666; background: #333; display: flex; align-items: center; padding-left: 11px; font-size: 14px; color: #ccc; }
.search span { margin-left: 11px; letter-spacing: -.05px; }
.slot { position: relative; width: 49px; display: grid; place-items: center; }
.s48 { width: 48px; } .s48 + .slot:not(.s48) { margin-left: 2px; }
.slot:not(.s48) > svg { width: 24px; height: 24px; }
.run::after { content: ""; position: absolute; left: 4px; right: 4px; bottom: 0; height: 2px; background: #76b9ed; }
.multi::after { background: linear-gradient(90deg, #76b9ed 31px, #3d4347 31px 32px, #5f8db8 32px); }
.active.run { background: #4a5054; }
.active.run::after { left: 0; right: 0; }
.profile { position: absolute; left: 22px; top: 18px; width: 16px; height: 16px; border-radius: 50%; background: #0c4a3e; font-size: 9px; line-height: 16px; text-align: center; }
.ai { width: 21px; height: 21px; border-radius: 4px; background: #330000; color: #ff9a00; font: bold 13px/20px "Open Sans", sans-serif; text-align: center; letter-spacing: -.3px; }
.tray { flex: 1; display: flex; align-items: center; justify-content: flex-end; margin-right: 4px; border-right: 1px solid #777; font-size: 14px; white-space: nowrap; }
.temp { width: 27px; margin-left: 8px; letter-spacing: -.7px; }
.sky { width: 81px; margin-left: 8px; letter-spacing: -.42px; }
.t-up { margin-left: 18px; } .t-bat { margin-left: 9px; } .t-wifi { margin-left: 10px; } .t-vol { margin-left: 9px; }
.clock { width: 64px; margin-left: 4px; display: flex; flex-direction: column; align-items: center; font-size: 11.500px; line-height: 18px; letter-spacing: -.3px; }
.date { letter-spacing: -.4px; }
.notes { position: relative; width: 16px; height: 16px; margin: 0 20px 0 12px; }
.badge { position: absolute; left: 7px; top: 7px; width: 17px; height: 17px; border-radius: 50%; background: #3a3f43; border: 1px solid #999; font: 600 11px/15px "Open Sans", sans-serif; text-align: center; }
```
